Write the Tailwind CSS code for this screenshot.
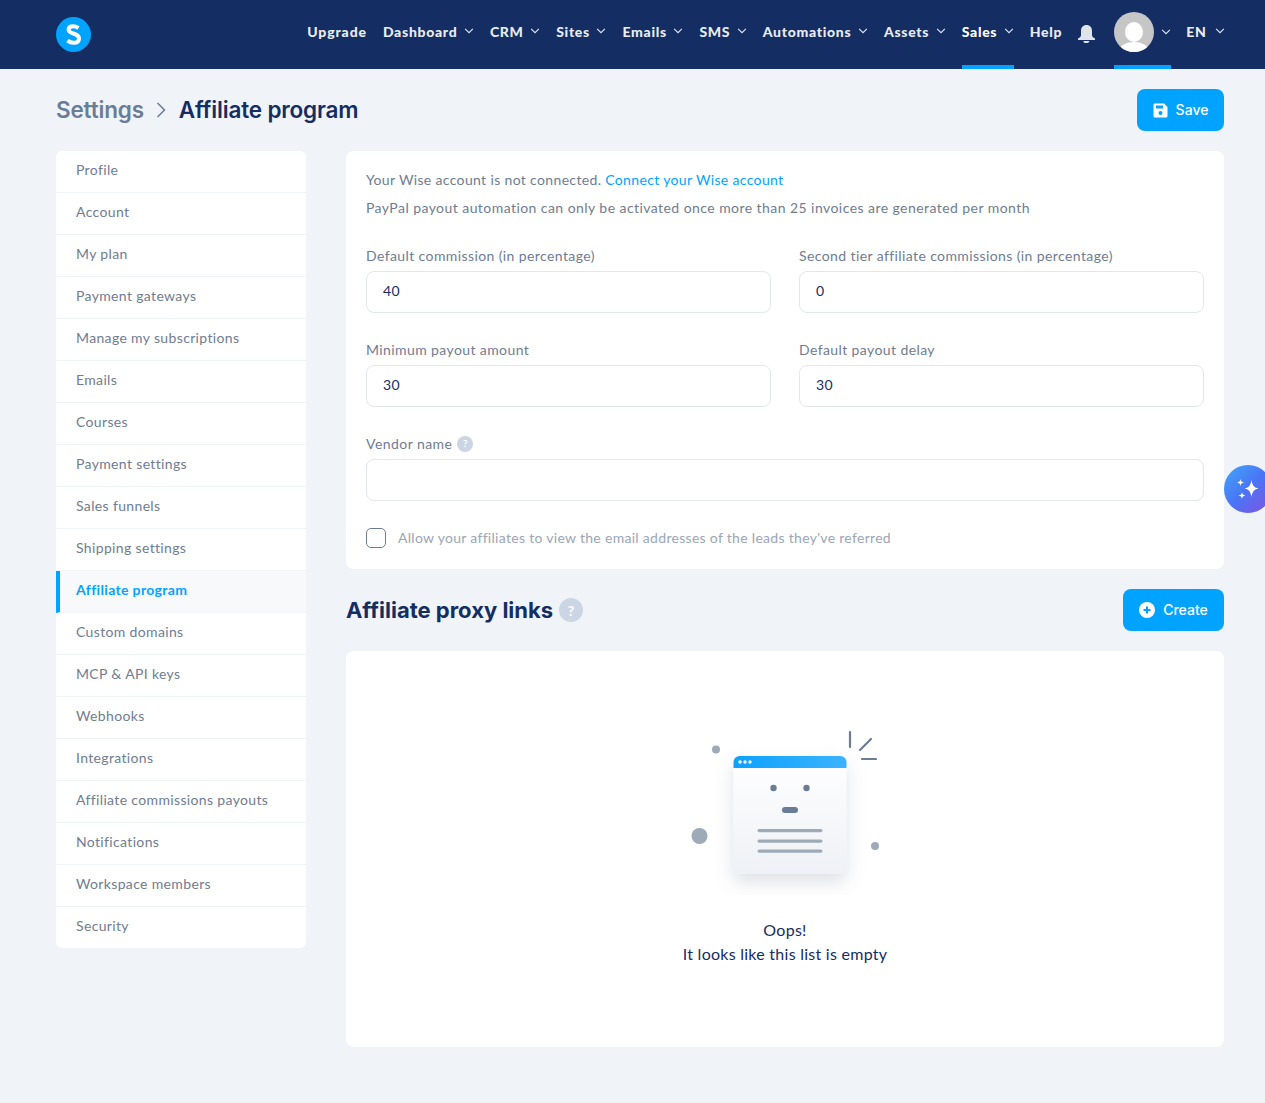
<!DOCTYPE html>
<html lang="en">
<head>
    <meta charset="UTF-8">
    <title>Affiliate program</title>
    <script src="https://cdn.jsdelivr.net/npm/@tailwindcss/browser@4"></script>
</head>
<body class="bg-[#f0f4f9] font-['Lato',sans-serif] h-[1103px] overflow-hidden relative">
    <!-- top nav -->
    <nav class="h-[69px] bg-[#142d63] flex items-center pl-[56px] pr-[40px] text-[14px] font-black text-[#e8ecf2] tracking-[0.7px]">
        <svg class="w-[35px] h-[35px] shrink-0" viewBox="0 0 35 35"><circle cx="17.5" cy="17.5" r="17.5" fill="#00a3ff"/><path d="M22.5 11C20.500 9.700 18.800 9.200 17 9.200C14.200 9.200 12.600 10.600 12.600 12.700C12.600 17.500 23 15.500 23 21.500C23 24.300 20.800 25.800 17.700 25.800C15.500 25.800 13.300 25 11.500 23.600" fill="none" stroke="#fff" stroke-width="4"/></svg>
        <div class="ml-auto flex items-center h-full">
            <a class="mr-[16px] -mt-[7px] tracking-[0.9px]">Upgrade</a>
            <a class="flex items-center gap-[6.500px] mr-[16px] -mt-[7px]">Dashboard <svg class="w-[10px] h-[6px]" viewBox="0 0 11 7" fill="none" stroke="#dfe5ee" stroke-width="1.300"><path d="M1 1l4.500 4.500L10 1"/></svg></a>
            <a class="flex items-center gap-[6.500px] mr-[16px] -mt-[7px]">CRM <svg class="w-[10px] h-[6px]" viewBox="0 0 11 7" fill="none" stroke="#dfe5ee" stroke-width="1.300"><path d="M1 1l4.500 4.500L10 1"/></svg></a>
            <a class="flex items-center gap-[6.500px] mr-[16px] -mt-[7px]">Sites <svg class="w-[10px] h-[6px]" viewBox="0 0 11 7" fill="none" stroke="#dfe5ee" stroke-width="1.300"><path d="M1 1l4.500 4.500L10 1"/></svg></a>
            <a class="flex items-center gap-[6.500px] mr-[16px] -mt-[7px]">Emails <svg class="w-[10px] h-[6px]" viewBox="0 0 11 7" fill="none" stroke="#dfe5ee" stroke-width="1.300"><path d="M1 1l4.500 4.500L10 1"/></svg></a>
            <a class="flex items-center gap-[6.500px] mr-[16px] -mt-[7px]">SMS <svg class="w-[10px] h-[6px]" viewBox="0 0 11 7" fill="none" stroke="#dfe5ee" stroke-width="1.300"><path d="M1 1l4.500 4.500L10 1"/></svg></a>
            <a class="flex items-center gap-[6.500px] mr-[16px] -mt-[7px]">Automations <svg class="w-[10px] h-[6px]" viewBox="0 0 11 7" fill="none" stroke="#dfe5ee" stroke-width="1.300"><path d="M1 1l4.500 4.500L10 1"/></svg></a>
            <a class="flex items-center gap-[6.500px] mr-[16px] -mt-[7px]">Assets <svg class="w-[10px] h-[6px]" viewBox="0 0 11 7" fill="none" stroke="#dfe5ee" stroke-width="1.300"><path d="M1 1l4.500 4.500L10 1"/></svg></a>
            <a class="h-full flex items-center gap-[6.500px] mr-[16px] border-b-4 border-[#00a3ff] text-white"><span class="-mt-[3px]">Sales</span> <svg class="w-[10px] h-[6px] -mt-[3px]" viewBox="0 0 11 7" fill="none" stroke="#dfe5ee" stroke-width="1.300"><path d="M1 1l4.500 4.500L10 1"/></svg></a>
            <a class="mr-[16px] -mt-[7px]">Help</a>
            <svg class="w-[17px] h-[18px] mr-[19px] -mt-[1px]" viewBox="0 0 17 18" fill="#dfe3ea"><path d="M8.500 0C5 0 3 2.500 3 6v4c0 1.500-1 2.500-3 3.500V15h17v-1.500c-2-1-3-2-3-3.500V6c0-3.500-2-6-5.500-6z"/><path d="M5.500 16h6l-.5 1c-.4.600-1 1-1.500 1h-2.500c-.5 0-1.100-.4-1.500-1z"/></svg>
            <a class="h-full flex items-center gap-[7px] mr-[15px] border-b-4 border-[#00a3ff]">
                <svg class="w-[40px] h-[40px] -mt-[1px]" viewBox="0 0 40 40"><defs><clipPath id="av"><circle cx="20" cy="20" r="20"/></clipPath></defs><g clip-path="url(#av)"><rect width="40" height="40" fill="#c6c6c6"/><ellipse cx="20" cy="20" rx="9" ry="10" fill="#fff"/><ellipse cx="20" cy="38" rx="14" ry="8" fill="#fff"/></g></svg>
                <svg class="w-[10px] h-[6px] -mt-[1px]" viewBox="0 0 11 7" fill="none" stroke="#dfe5ee" stroke-width="1.300"><path d="M1 1l4.500 4.500L10 1"/></svg>
            </a>
            <a class="flex items-center gap-[8.500px] -mt-[7px]">EN <svg class="w-[10px] h-[6px]" viewBox="0 0 11 7" fill="none" stroke="#dfe5ee" stroke-width="1.300"><path d="M1 1l4.500 4.500L10 1"/></svg></a>
        </div>
    </nav>

    <!-- page header -->
    <div class="flex items-center justify-between pl-[56px] pr-[41px] h-[82px]">
        <div class="flex items-center font-['Inter',sans-serif] font-semibold text-[22.500px] tracking-[-0.17px]">
            <span class="text-[#6b7c96]">Settings</span>
            <svg class="w-[10px] h-[16px] mx-[12.500px]" viewBox="0 0 10 16" fill="none" stroke="#6b7c96" stroke-width="1.500"><path d="M1.500 1l7 7-7 7"/></svg>
            <span class="text-[#142d63]">Affiliate program</span>
        </div>
        <button class="w-[87px] h-[42px] rounded-[8px] bg-[#00a3ff] text-white text-[14px] font-['Inter',sans-serif] font-medium flex items-center justify-center gap-[8px]">
            <svg class="w-[15px] h-[15px]" viewBox="0 0 15 15" fill="#fff"><path d="M2 .5h9L14.500 4v9c0 .8-.7 1.500-1.500 1.500H2C1.200 14.500.5 13.800.5 13V2C.5 1.200 1.200.5 2 .5z"/><rect x="3" y="2.500" width="7" height="3" fill="#00a3ff"/><circle cx="7.500" cy="10" r="2" fill="#00a3ff"/></svg>
            <span class="-mt-[1px]">Save</span>
        </button>
    </div>

    <div class="flex items-start pl-[56px] pr-[41px] mt-0">
        <!-- sidebar -->
        <aside class="w-[250px] shrink-0 bg-white rounded-[6px] overflow-hidden text-[14px] text-[#6f7c92] tracking-[0.35px]">
            <a class="h-[42px] flex items-center pl-[20px] pb-[4px] border-b border-[#f0f3f7]">Profile</a>
            <a class="h-[42px] flex items-center pl-[20px] pb-[4px] border-b border-[#f0f3f7]">Account</a>
            <a class="h-[42px] flex items-center pl-[20px] pb-[4px] border-b border-[#f0f3f7]">My plan</a>
            <a class="h-[42px] flex items-center pl-[20px] pb-[4px] border-b border-[#f0f3f7]">Payment gateways</a>
            <a class="h-[42px] flex items-center pl-[20px] pb-[4px] border-b border-[#f0f3f7]">Manage my subscriptions</a>
            <a class="h-[42px] flex items-center pl-[20px] pb-[4px] border-b border-[#f0f3f7]">Emails</a>
            <a class="h-[42px] flex items-center pl-[20px] pb-[4px] border-b border-[#f0f3f7]">Courses</a>
            <a class="h-[42px] flex items-center pl-[20px] pb-[4px] border-b border-[#f0f3f7]">Payment settings</a>
            <a class="h-[42px] flex items-center pl-[20px] pb-[4px] border-b border-[#f0f3f7]">Sales funnels</a>
            <a class="h-[42px] flex items-center pl-[20px] pb-[4px] border-b border-[#f0f3f7]">Shipping settings</a>
            <a class="h-[42px] flex items-center pl-[16px] pb-[4px] border-l-4 border-b border-l-[#00a3ff] border-b-[#f0f3f7] bg-[#f8f9fb] text-[#00a3ff] font-bold">Affiliate program</a>
            <a class="h-[42px] flex items-center pl-[20px] pb-[4px] border-b border-[#f0f3f7]">Custom domains</a>
            <a class="h-[42px] flex items-center pl-[20px] pb-[4px] border-b border-[#f0f3f7]">MCP &amp; API keys</a>
            <a class="h-[42px] flex items-center pl-[20px] pb-[4px] border-b border-[#f0f3f7]">Webhooks</a>
            <a class="h-[42px] flex items-center pl-[20px] pb-[4px] border-b border-[#f0f3f7]">Integrations</a>
            <a class="h-[42px] flex items-center pl-[20px] pb-[4px] border-b border-[#f0f3f7]">Affiliate commissions payouts</a>
            <a class="h-[42px] flex items-center pl-[20px] pb-[4px] border-b border-[#f0f3f7]">Notifications</a>
            <a class="h-[42px] flex items-center pl-[20px] pb-[4px] border-b border-[#f0f3f7]">Workspace members</a>
            <a class="h-[41px] flex items-center pl-[20px] pb-[4px]">Security</a>
        </aside>

        <main class="ml-[40px] w-[878px] shrink-0">
            <!-- settings form -->
            <section class="h-[418px] bg-white rounded-[8px] px-[20px] pt-[15px] text-[14px] text-[#6f7c92] tracking-[0.4px]">
                <p class="h-[28px] leading-[28px] tracking-[0.35px]">Your Wise account is not connected. <a class="text-[#00a3ff]">Connect your Wise account</a></p>
                <p class="h-[28px] leading-[28px] tracking-[0.44px]">PayPal payout automation can only be activated once more than 25 invoices are generated per month</p>
                <div class="grid grid-cols-2 gap-x-[28px] mt-[24px]">
                    <div class="h-[94px]">
                        <label class="block h-[25px] leading-[20px]">Default commission (in percentage)</label>
                        <div class="h-[42px] border border-[#e3e7ec] rounded-[8px] flex items-center pl-[16px] pb-[4px] text-[#142d63]">40</div>
                    </div>
                    <div class="h-[94px]">
                        <label class="block h-[25px] leading-[20px]">Second tier affiliate commissions (in percentage)</label>
                        <div class="h-[42px] border border-[#e3e7ec] rounded-[8px] flex items-center pl-[16px] pb-[4px] text-[#142d63]">0</div>
                    </div>
                    <div class="h-[94px]">
                        <label class="block h-[25px] leading-[20px]">Minimum payout amount</label>
                        <div class="h-[42px] border border-[#e3e7ec] rounded-[8px] flex items-center pl-[16px] pb-[4px] text-[#142d63]">30</div>
                    </div>
                    <div class="h-[94px]">
                        <label class="block h-[25px] leading-[20px]">Default payout delay</label>
                        <div class="h-[42px] border border-[#e3e7ec] rounded-[8px] flex items-center pl-[16px] pb-[4px] text-[#142d63]">30</div>
                    </div>
                </div>
                <label class="flex items-center gap-[5px] h-[25px] pb-[6px] tracking-[0.45px]">Vendor name
                    <span class="w-[16px] h-[16px] rounded-full bg-[#cbd5e3] text-white text-[10px] font-bold flex items-center justify-center">?</span>
                </label>
                <div class="h-[42px] border border-[#e3e7ec] rounded-[8px]"></div>
                <div class="flex items-center mt-[26px] text-[#9aa5b8] tracking-[0.3px]">
                    <span class="w-[20px] h-[20px] border border-[#6b7c96] rounded-[5px] mr-[12px]"></span>
                    Allow your affiliates to view the email addresses of the leads they've referred
                </div>
            </section>

            <!-- proxy links -->
            <div class="h-[42px] mt-[20px] flex items-center justify-between">
                <div class="flex items-center gap-[6px]">
                    <h2 class="font-['Inter',sans-serif] font-bold text-[22px] text-[#142d63]">Affiliate proxy links</h2>
                    <span class="w-[24px] h-[24px] rounded-full bg-[#cbd5e3] text-white font-bold text-[14px] flex items-center justify-center">?</span>
                </div>
                <button class="w-[101px] h-[42px] rounded-[8px] bg-[#00a3ff] text-white text-[14px] font-['Inter',sans-serif] font-medium flex items-center justify-center gap-[8px]">
                    <svg class="w-[16px] h-[16px]" viewBox="0 0 16 16"><circle cx="8" cy="8" r="8" fill="#fff"/><path d="M8 4.500v7M4.500 8h7" stroke="#00a3ff" stroke-width="2"/></svg>
                    <span class="-mt-[1px]">Create</span>
                </button>
            </div>

            <section class="h-[396px] mt-[20px] bg-white rounded-[8px] flex flex-col items-center pt-[72px]">
                <!-- empty state illustration -->
                <svg class="w-[230px] h-[180px] shrink-0 -mt-[8px]" viewBox="0 0 230 180">
                    <defs>
                        <linearGradient id="card" x1="0" y1="0" x2="0" y2="1"><stop offset="0" stop-color="#fff"/><stop offset="1" stop-color="#eef1f6"/></linearGradient>
                        <linearGradient id="bar" x1="0" y1="0" x2="1" y2="0"><stop offset="0" stop-color="#0ba2ff"/><stop offset="1" stop-color="#3cb2ff"/></linearGradient>
                        <filter id="soft" x="-40%" y="-40%" width="180%" height="180%"><feDropShadow dx="0" dy="8" stdDeviation="9" flood-color="#64748b" flood-opacity="0.22"/></filter>
                    </defs>
                    <rect x="63.500" y="41" width="113" height="118" rx="6" fill="url(#card)" filter="url(#soft)"/>
                    <path d="M63.500 53V47a6 6 0 0 1 6-6h101a6 6 0 0 1 6 6v6z" fill="url(#bar)"/>
                    <circle cx="70" cy="47" r="1.700" fill="#fff"/><circle cx="75" cy="47" r="1.700" fill="#fff"/><circle cx="80" cy="47" r="1.700" fill="#fff"/>
                    <circle cx="103.500" cy="73" r="3.200" fill="#6b7c96"/><circle cx="136.500" cy="73" r="3.200" fill="#6b7c96"/>
                    <rect x="112" y="92" width="16" height="6" rx="3" fill="#6b7c96"/>
                    <g fill="#9dabb8"><rect x="87.500" y="114" width="65" height="3.200" rx="1.600"/><rect x="87.500" y="124.500" width="65" height="3.200" rx="1.600"/><rect x="87.500" y="134.500" width="65" height="3.200" rx="1.600"/></g>
                    <circle cx="46" cy="34.500" r="4" fill="#9dabb8"/><circle cx="29.500" cy="121" r="8" fill="#9dabb8"/><circle cx="205" cy="131" r="4" fill="#9dabb8"/>
                    <g stroke="#6b7c96" stroke-width="2.200" stroke-linecap="round" fill="none"><path d="M180 17v15M201 24l-11 11M192 44h14"/></g>
                </svg>
                <p class="text-[16px] leading-[24px] text-[#142d63] text-center mt-[23px] tracking-[0.26px]">Oops!<br>It looks like this list is empty</p>
            </section>
        </main>
    </div>

    <!-- floating assistant button, sits over the page edge -->
    <div class="absolute left-[1224px] top-[465px] w-[48px] h-[48px] rounded-full bg-linear-to-br from-[#3ea6fb] via-[#4a74f5] to-[#7a4fe0] flex items-center pl-[12px]">
        <svg class="w-[24px] h-[24px]" viewBox="0 0 24 24" fill="#fff"><path d="M15.500 3c.8 5 2.200 7.500 7 8.500-4.800 1-6.200 3.500-7 8.500-.8-5-2.200-7.500-7-8.500 4.800-1 6.200-3.500 7-8.500z"/><path d="M4.500 2c.4 2.300 1 3 3.500 3.500-2.500.5-3.100 1.200-3.500 3.500C4.100 6.700 3.500 6 1 5.500 3.500 5 4.100 4.300 4.500 2z"/><path d="M6 15c.4 2.300 1 3 3.500 3.500C7 19 6.400 19.700 6 22c-.4-2.300-1-3-3.500-3.500C5 18 5.600 17.300 6 15z"/></svg>
    </div>
</body>
</html>
